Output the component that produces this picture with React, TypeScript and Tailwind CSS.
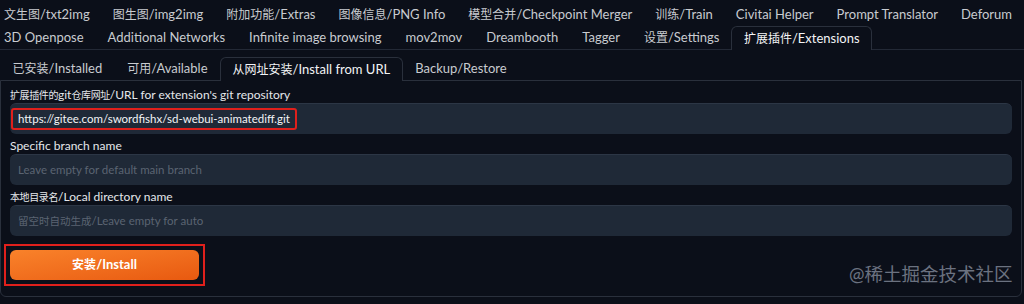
import React from 'react';

const topTabs = [
  '文生图/txt2img',
  '图生图/img2img',
  '附加功能/Extras',
  '图像信息/PNG Info',
  '模型合并/Checkpoint Merger',
  '训练/Train',
  'Civitai Helper',
  'Prompt Translator',
  'Deforum',
];

const secondTabs = [
  '3D Openpose',
  'Additional Networks',
  'Infinite image browsing',
  'mov2mov',
  'Dreambooth',
  'Tagger',
  '设置/Settings',
  '扩展插件/Extensions',
];

const subTabs = ['已安装/Installed', '可用/Available', '从网址安装/Install from URL', 'Backup/Restore'];

// the CJK glyphs in the shot run a little smaller than the latin text beside them
const Mixed: React.FC<{ text: string; cjk: string }> = ({ text, cjk }) => (
  <>
    {text.split(/([\u4e00-\u9fff]+)/).map((part, i) =>
      /[\u4e00-\u9fff]/.test(part) ? (
        <span key={i} className={cjk}>
          {part}
        </span>
      ) : (
        <span key={i}>{part}</span>
      )
    )}
  </>
);

const Tab: React.FC<{ label: string; active?: boolean; pad?: string }> = ({ label, active, pad = 'px-[12.5px]' }) =>
  active ? (
    <div className="h-[24px] px-[11.5px] flex items-center whitespace-nowrap text-[#f3f4f6] bg-[#0b0f19] border border-b-0 border-[#2a303c] rounded-t-[6px] -mb-px relative z-10">
      <Mixed text={label} cjk="text-[12px]" />
    </div>
  ) : (
    <div className={`h-[23px] ${pad} flex items-center whitespace-nowrap text-[#c8cbd0]`}>
      <Mixed text={label} cjk="text-[12px]" />
    </div>
  );

const Field: React.FC<{ label: string; children: React.ReactNode }> = ({ label, children }) => (
  <div className="flex flex-col">
    <div className="text-[12px] leading-[16px] text-[#e5e7eb] whitespace-nowrap">
      <Mixed text={label} cjk="text-[10px] tracking-[-0.4px]" />
    </div>
    <div className="h-[31px] rounded-[6px] bg-[#1f2937] border-t border-[#2c3645] flex items-center">
      {children}
    </div>
  </div>
);

const App: React.FC = () => {
  return (
    <div
      className="relative w-[1024px] h-[304px] bg-[#0b0f19] overflow-hidden text-[13px]"
      style={{ fontFamily: 'Lato, "Noto Sans CJK SC", sans-serif' }}
    >
      {/* main tabs, row 1 */}
      <div className="flex -ml-[7.5px] pt-[3px]">
        {topTabs.map((t) => (
          <Tab key={t} label={t} pad="px-[11.5px]" />
        ))}
      </div>

      {/* main tabs, row 2 */}
      <div className="flex border-b border-[#232936]">
        <div className="flex -ml-[8px]">
          {secondTabs.map((t) => (
            <Tab key={t} label={t} pad="px-[12px]" active={t === '扩展插件/Extensions'} />
          ))}
        </div>
      </div>

      {/* sub tabs */}
      <div className="flex mt-[7px]">
        {subTabs.map((t, i) => (
          <Tab key={t} label={t} active={i === 2} />
        ))}
      </div>

      {/* panel */}
      <div className="w-[1022px] border border-[#2a303c] rounded-b-[6px] px-[9px] pt-[6px] pb-[10px] flex flex-col gap-[4px]">
        <Field label="扩展插件的git仓库网址/URL for extension's git repository">
          <div className="ml-px h-[22px] border-2 border-[#e0201c] rounded-[3px] px-[5px] flex items-center text-[11.5px] text-[#f3f4f6] whitespace-nowrap">
            https://gitee.com/swordfishx/sd-webui-animatediff.git
          </div>
        </Field>
        <Field label="Specific branch name">
          <div className="pl-[8px] text-[11.5px] text-[#5b6472]">Leave empty for default main branch</div>
        </Field>
        <Field label="本地目录名/Local directory name">
          <div className="pl-[8px] text-[11.5px] text-[#5b6472] whitespace-nowrap">
            <Mixed text="留空时自动生成/Leave empty for auto" cjk="text-[10.5px]" />
          </div>
        </Field>

        <div className="mt-[4px] -ml-[6px] self-start border-2 border-[#e0201c] p-[4px]">
          <button className="w-[189px] h-[30px] rounded-[6px] bg-gradient-to-br from-[#f9822a] to-[#e8590f] text-white font-bold text-[13px] flex items-center justify-center">
            <Mixed text="安装/Install" cjk="text-[12px]" />
          </button>
        </div>
      </div>

      {/* watermark */}
      <div className="absolute left-[849px] top-[261px] text-[18.5px] leading-[26px] text-[#6b7280] whitespace-nowrap">
        @稀土掘金技术社区
      </div>
    </div>
  );
};

export default App;
